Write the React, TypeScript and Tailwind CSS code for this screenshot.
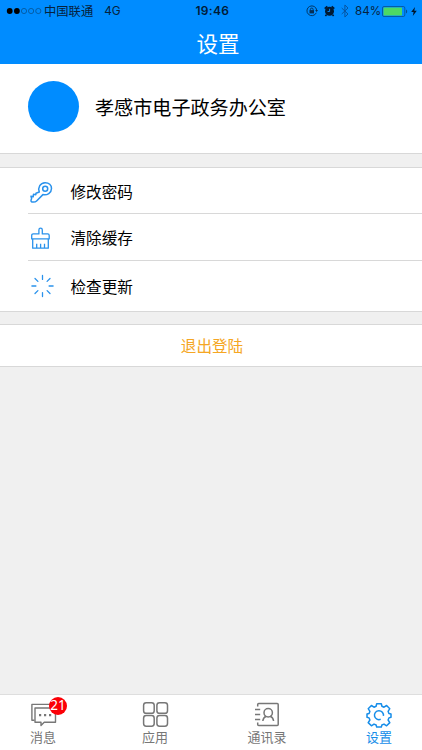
import type { ReactNode } from 'react';
import clsx from 'clsx';

const KeyIcon = () => (
  <svg className="w-6 h-6" viewBox="0 0 24 24" fill="none" stroke="#2a92ec" strokeWidth="1.5" strokeLinejoin="round">
    <path d="M10.300 12C8.600 7.400 11.300 2.900 16 2.700c4-.1 6.500 2.300 6.500 5.700 0 4.300-4.400 7.300-8.600 6.200L7.600 21c-.8.8-2 1.200-3.600 1.100-1.700 0-2.300-.9-1.900-2.100l.5-1.500-.6-2.200 2.200.5.300-2.500 2.300.4.200-1.400z" />
    <circle cx="16.200" cy="8.800" r="2.500" />
  </svg>
);

const BrushIcon = () => (
  <svg className="w-6 h-6" viewBox="0 0 24 24" fill="none" stroke="#2a92ec" strokeWidth="1.3" strokeLinejoin="round">
    <path d="M9.900 7.900V3.900a1.700 1.700 0 0 1 3.400 0v4h5.400c1 0 1.500.6 1.500 1.500v3.500H2.700V9.400c0-.9.6-1.500 1.500-1.500z" />
    <path d="M3.700 12.900v9.300h15.600v-9.300M7.700 22.200v-4.500M11.600 22.200v-4.500M15.500 22.200v-4.500" />
  </svg>
);

const LoadingIcon = () => (
  <svg className="w-6 h-6 translate-x-px" viewBox="0 0 24 24" fill="none" stroke="#2a92ec" strokeWidth="1.300" strokeLinecap="round">
    <path d="M12.500 1.400v4M12.500 18.600v4M1.900 12h4M19.100 12h4M5 4.500l2.900 2.900M17.100 16.600l2.900 2.900M5 19.500l2.900-2.900M17.100 7.400L20 4.500" />
  </svg>
);

const MessageIcon = () => (
  <svg className="w-7 h-7" viewBox="0 0 28 28" fill="none" stroke="#777" strokeWidth="1.400" strokeLinejoin="round">
    <path d="M5.500 20.200H2.900V4.400h21v3" />
    <path d="M6 8h20.500v14.300H15.200l-3.200 3.200v-3.200H6z" />
    <path d="M10 15.200h2.200M15 15.200h2.200M20 15.200h2.200" strokeWidth="2.200" />
  </svg>
);

const AppsIcon = () => (
  <svg className="w-7 h-7" viewBox="0 0 28 28" fill="none" stroke="#777" strokeWidth="1.500">
    <rect x="2.600" y="2.700" width="10.600" height="10.600" rx="2.600" />
    <rect x="15.900" y="2.700" width="10.600" height="10.600" rx="2.600" />
    <rect x="2.600" y="15.600" width="10.600" height="10.600" rx="2.600" />
    <rect x="15.900" y="15.600" width="10.600" height="10.600" rx="2.600" />
  </svg>
);

const ContactsIcon = () => (
  <svg className="w-7 h-7" viewBox="0 0 28 28" fill="none" stroke="#777" strokeWidth="1.500">
    <path d="M4.700 6.500V4.500a1 1 0 0 1 1-1h18.500a1 1 0 0 1 1 1v20a1 1 0 0 1-1 1H5.700a1 1 0 0 1-1-1v-2M2 9.500h5.200M2 14.500h5.200M2 19.500h5.200" />
    <circle cx="15.200" cy="12.700" r="4.200" />
    <path d="M9.800 21c.3-2.300 1.600-4 3.400-4.700M20.600 21c-.3-2.300-1.600-4-3.400-4.700" />
  </svg>
);

const GearIcon = () => (
  <svg className="w-7 h-7" viewBox="0 0 28 28" fill="none" stroke="#168de9" strokeWidth="1.500" strokeLinejoin="round">
    <path d="M11.700 3.800h4.600l.6 2.500 2.100.9 2.600-1.700 3.200 3.200-1.700 2.600.8 2.100 2.100.5v3.400l-2.100.6-.8 2.100 1.700 2.600-3.200 3.200-2.600-1.700-2.100.9-.6 2.100h-4.600l-.6-2.100-2.100-.9-2.600 1.700-3.200-3.200 1.700-2.600-.8-2.100-2.100-.6v-3.400l2.100-.5.8-2.100-1.700-2.600 3.200-3.200L9 7.200l2.100-.9z" />
    <path d="M15.700 19.300A4.500 4.500 0 1 1 18.400 15.900" />
  </svg>
);

const StatusBar = () => (
  <div className="relative flex items-center h-[22px] pl-[6px] pr-[5px] text-[#06223d] text-[12.300px] leading-none">
    <svg className="w-[36px] h-[8px]" viewBox="0 0 36 8">
      <circle cx="3.700" cy="4" r="2.900" fill="#000" />
      <circle cx="10.900" cy="4" r="2.900" fill="#000" />
      <g fill="none" stroke="#064a84" strokeWidth=".7">
        <circle cx="18" cy="4" r="2.600" />
        <circle cx="25.100" cy="4" r="2.600" />
        <circle cx="32.300" cy="4" r="2.600" />
      </g>
    </svg>
    <span className="ml-[2px]">中国联通</span>
    <span className="ml-[11px] pt-[2px] font-[Inter,sans-serif] text-[11.800px]">4G</span>
    <span className="absolute left-[195.500px] top-[5px] font-[Inter,sans-serif] font-semibold text-[12px] leading-[12px] tracking-[0.300px] text-[#001c38]">
      19:46
    </span>
    <div className="flex items-center ml-auto">
      {/* rotation lock */}
      <svg className="w-[12px] h-[12px]" viewBox="0 0 12 12" fill="none" stroke="#052e55" strokeWidth=".9">
        <path d="M10.300 7.800A4.900 4.900 0 1 1 10.700 5.200" />
        <path d="M9.200 5h2.800l-1.400 2z" fill="#052e55" stroke="none" />
        <rect x="3.500" y="5.100" width="4.500" height="3.300" fill="#052e55" stroke="none" />
        <path d="M4.400 5.200V4.400a1.350 1.350 0 0 1 2.700 0v.8" />
      </svg>
      {/* alarm */}
      <svg className="w-[11px] h-[12px] ml-[6px]" viewBox="0 0 11 12">
        <circle cx="5.500" cy="6.300" r="4.500" fill="#001a33" />
        <path d="M.7 3.700l2.600-2.400M7.700 1.300l2.600 2.400M2.400 9.800l-1 1.300M8.600 9.800l1 1.300" stroke="#001a33" strokeWidth="1.600" />
        <path d="M5.600 3.800v2.700h-2" fill="none" stroke="#008cff" strokeWidth=".9" />
      </svg>
      <svg className="w-[8px] h-[14px] ml-[6px]" viewBox="0 0 8 14" fill="none" stroke="#0755a0" strokeWidth="1">
        <path d="M.7 4l6.300 6-3.100 3V1L7 4 .7 10" />
      </svg>
      <span className="w-[26px] ml-[6px] pt-[2px] font-[Inter,sans-serif] text-[11.600px]">84%</span>
      <svg className="w-[26px] h-[11px] ml-[1px]" viewBox="0 0 26 11">
        <rect x=".5" y=".5" width="22.300" height="10" rx="1.500" fill="none" stroke="#064f91" strokeWidth=".8" />
        <rect x="1.500" y="1.500" width="18.500" height="8" rx=".6" fill="#4cd964" />
        <path d="M24 3.500c1.600.7 1.600 3.300 0 4z" fill="#064f91" />
      </svg>
      <svg className="w-[6px] h-[9px] ml-[3px]" viewBox="0 0 6 9">
        <path d="M4 0L.2 5h2.400L1.800 9 5.800 3.700H3.300z" fill="#00172d" />
      </svg>
    </div>
  </div>
);

const SettingRow = ({ icon, label, className }: { icon: ReactNode; label: string; className: string }) => (
  <button className={clsx('flex items-center w-full border-[#d8d8d8] text-left', className)}>
    {icon}
    <span className="ml-[17.500px] pb-px text-[15.600px] leading-[20px]">{label}</span>
  </button>
);

type TabProps = { icon: ReactNode; label: string; badge?: number; active?: boolean };

const Tab = ({ icon, label, badge, active }: TabProps) => (
  <button className={clsx('relative flex flex-col items-center w-[60px] pt-[5px]', active ? 'text-[#168de9]' : 'text-[#777]')}>
    {icon}
    <span className="text-[13px] leading-[17px]">{label}</span>
    {badge && (
      <span className="absolute top-[2px] left-[36px] flex items-center justify-center w-[18px] h-[18px] pb-px rounded-full bg-[#fb0007] text-white font-['Noto_Sans',sans-serif] text-[13.500px] leading-none">
        {badge}
      </span>
    )}
  </button>
);

const App = () => {
  return (
    <div className="flex flex-col w-full h-screen overflow-hidden bg-[#f0f0f0] text-black font-['Noto_Sans_CJK_SC',sans-serif]">
      <header className="h-16 shrink-0 bg-[#008cff]">
        <StatusBar />
        <h1 className="pl-[14px] text-center text-[21.500px] leading-[42px] text-white">设置</h1>
      </header>

      <section className="flex items-center h-[90px] pl-[28px] pb-[4px] shrink-0 bg-white border-b border-[#d8d8d8]">
        <div className="w-[51px] h-[51px] rounded-full bg-[#008cff]" />
        <span className="ml-[16px] text-[19.100px] leading-[26px]">孝感市电子政务办公室</span>
      </section>

      <section className="mt-[13px] pl-[28px] shrink-0 bg-white border-y border-[#d8d8d8]">
        <SettingRow icon={<KeyIcon />} label="修改密码" className="h-[46px] pl-px pt-[2px] border-b" />
        <SettingRow icon={<BrushIcon />} label="清除缓存" className="h-[47px] pl-px pt-px border-b" />
        <SettingRow icon={<LoadingIcon />} label="检查更新" className="h-[50px] pl-px" />
      </section>

      <button className="h-[43px] mt-[12px] pl-[2px] shrink-0 bg-white border-y border-[#d8d8d8] text-[15.600px] text-[#f5a623]">
        退出登陆
      </button>

      <nav className="flex justify-between h-[56px] mt-auto pl-[13px] pr-[13px] shrink-0 bg-white border-t border-[#dedede]">
        <Tab icon={<MessageIcon />} label="消息" badge={21} />
        <Tab icon={<AppsIcon />} label="应用" />
        <Tab icon={<ContactsIcon />} label="通讯录" />
        <Tab icon={<GearIcon />} label="设置" active />
      </nav>
    </div>
  );
};

export default App;
